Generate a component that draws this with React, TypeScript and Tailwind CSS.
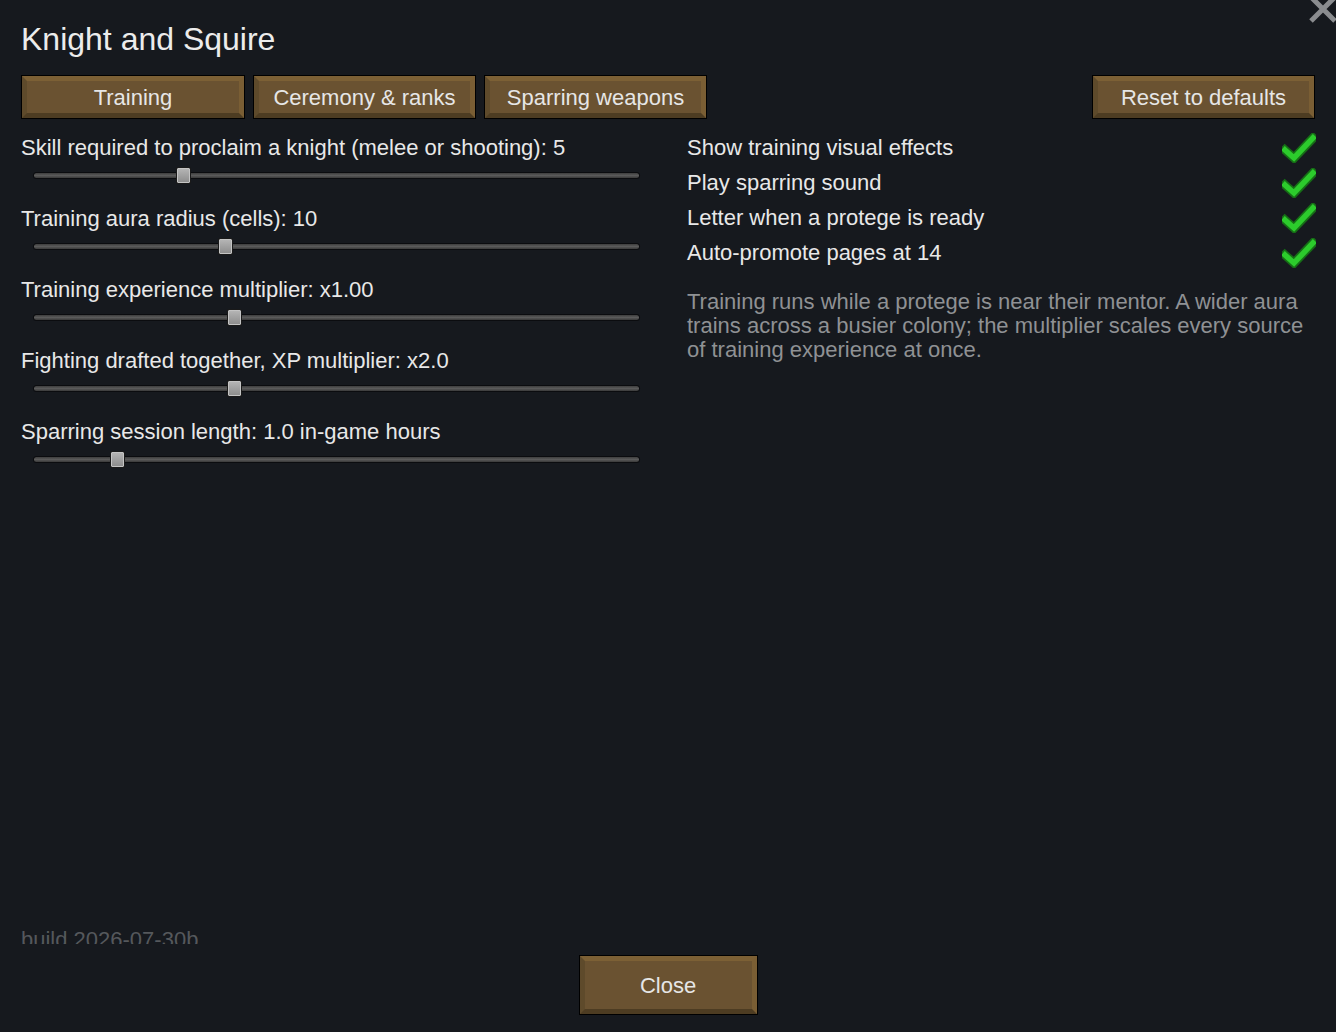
import React from "react";

const font = { fontFamily: '"Liberation Sans", Arial, sans-serif' };

function Btn({ label, className = "" }: { label: string; className?: string }) {
  return (
    <div className={`border border-black bg-black ${className}`}>
      <div className="h-full w-full border-[5px] border-t-[#7c6035] border-r-[#7a5e34] border-b-[#4d3c22] border-l-[#5e4a2b] bg-[#6a5231] flex items-center justify-center text-[22px] text-[#e6e6e6]">
        {label}
      </div>
    </div>
  );
}

function Slider({ label, pos }: { label: string; pos: number }) {
  return (
    <div className="h-[71px] flex flex-col">
      <div className="h-[24px] leading-[24px] text-[22px] text-[#e8e8e8] whitespace-nowrap">{label}</div>
      <div className="relative ml-[12px] w-[607px] h-[34px]">
        <div className="absolute left-0 right-0 top-[12px] h-[7px] rounded-full bg-[#0b0c0f] p-[1px]">
          <div className="h-full w-full rounded-full bg-gradient-to-b from-[#3e3e3e] via-[#5a5a5a] to-[#3a3a3a]" />
        </div>
        <div
          className="absolute top-[7px] w-[15px] h-[17px] rounded-[2px] bg-[#1a1a1a] p-[1px]"
          style={{ left: pos - 33 - 7 }}
        >
          <div className="h-full w-full rounded-[1px] bg-gradient-to-b from-[#b4b4b4] to-[#8e8e8e] border border-[#c4c4c4]" />
        </div>
      </div>
    </div>
  );
}

function Check() {
  return (
    <svg width="34" height="30" viewBox="0 0 34 30">
      <path d="M3 17 L12 25 L31 5" fill="none" stroke="#166e16" strokeWidth="9" strokeLinejoin="miter" strokeLinecap="square" />
      <path d="M3 17 L12 25 L31 5" fill="none" stroke="#2ccb2c" strokeWidth="5.5" strokeLinejoin="miter" strokeLinecap="square" />
    </svg>
  );
}

function Toggle({ label }: { label: string }) {
  return (
    <div className="h-[35px] flex items-center justify-between">
      <span className="text-[22px] text-[#e8e8e8]">{label}</span>
      <div className="-mr-[1px]">
        <Check />
      </div>
    </div>
  );
}

export default function App() {
  return (
    <div className="relative w-[1336px] h-[1032px] bg-[#16191e] overflow-hidden flex flex-col px-[21px]" style={font}>
      <svg className="absolute left-[1306px] top-[-8px]" width="34" height="34" viewBox="0 0 34 34">
        <path d="M5 5 L29 29 M29 5 L5 29" stroke="#8a8c8f" strokeWidth="5" />
      </svg>
      <div className="mt-[21px] h-[36px] leading-[36px] text-[32px] text-[#ececec]">Knight and Squire</div>
      <div className="mt-[18px] flex h-[44px]">
        <Btn label="Training" className="w-[224px]" />
        <Btn label="Ceremony & ranks" className="ml-[8px] w-[223px]" />
        <Btn label="Sparring weapons" className="ml-[8px] w-[223px]" />
        <div className="flex-1" />
        <Btn label="Reset to defaults" className="w-[223px]" />
      </div>
      <div className="mt-[17px] flex h-[792px]">
        <div className="w-[666px] flex flex-col">
          <Slider label="Skill required to proclaim a knight (melee or shooting): 5" pos={183} />
          <Slider label="Training aura radius (cells): 10" pos={225} />
          <Slider label="Training experience multiplier: x1.00" pos={234} />
          <Slider label="Fighting drafted together, XP multiplier: x2.0" pos={234} />
          <Slider label="Sparring session length: 1.0 in-game hours" pos={117} />
        </div>
        <div className="flex-1 flex flex-col -mt-[6px]">
          <Toggle label="Show training visual effects" />
          <Toggle label="Play sparring sound" />
          <Toggle label="Letter when a protege is ready" />
          <Toggle label="Auto-promote pages at 14" />
          <p className="mt-[20px] pr-[4px] text-[22px] leading-[24px] text-[#8f9194]">
            Training runs while a protege is near their mentor. A wider aura trains across a busier colony; the multiplier scales every source of training experience at once.
          </p>
        </div>
      </div>
      <div className="h-[16px] overflow-hidden">
        <div className="h-[24px] leading-[24px] text-[22px] text-[#55585c]">build 2026-07-30b</div>
      </div>
      <div className="mt-[11px] flex justify-center">
        <Btn label="Close" className="w-[179px] h-[60px]" />
      </div>
    </div>
  );
}
